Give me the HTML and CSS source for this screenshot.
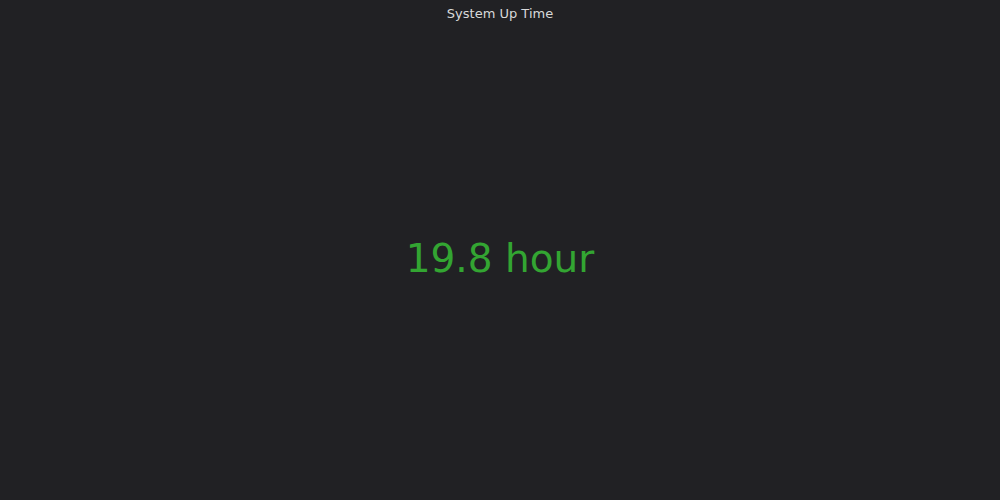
FILE: index.html
```html
<!DOCTYPE html>
<html>
<head>
<meta charset="utf-8">
<link rel="stylesheet" href="styles.css">
</head>
<body>
<div class="panel">
  <div class="panel-header">System Up Time</div>
  <div class="panel-body">
    <span class="value">19.8 hour</span>
  </div>
</div>
</body>
</html>
```
FILE: styles.css
```css
html, body {
  margin: 0;
  padding: 0;
  height: 100%;
  background: #212124;
  font-family: "DejaVu Sans", sans-serif;
}
.panel {
  height: 100%;
  display: flex;
  flex-direction: column;
}
.panel-header {
  padding-top: 6px;
  height: 16px;
  line-height: 16px;
  font-size: 13px;
  color: #d8d9da;
  text-align: center;
}
.panel-body {
  flex: 1;
  display: flex;
  align-items: center;
  justify-content: center;
  padding-bottom: 6px;
}
.value {
  font-size: 39px;
  color: #33a532;
  line-height: 1;
}
```
